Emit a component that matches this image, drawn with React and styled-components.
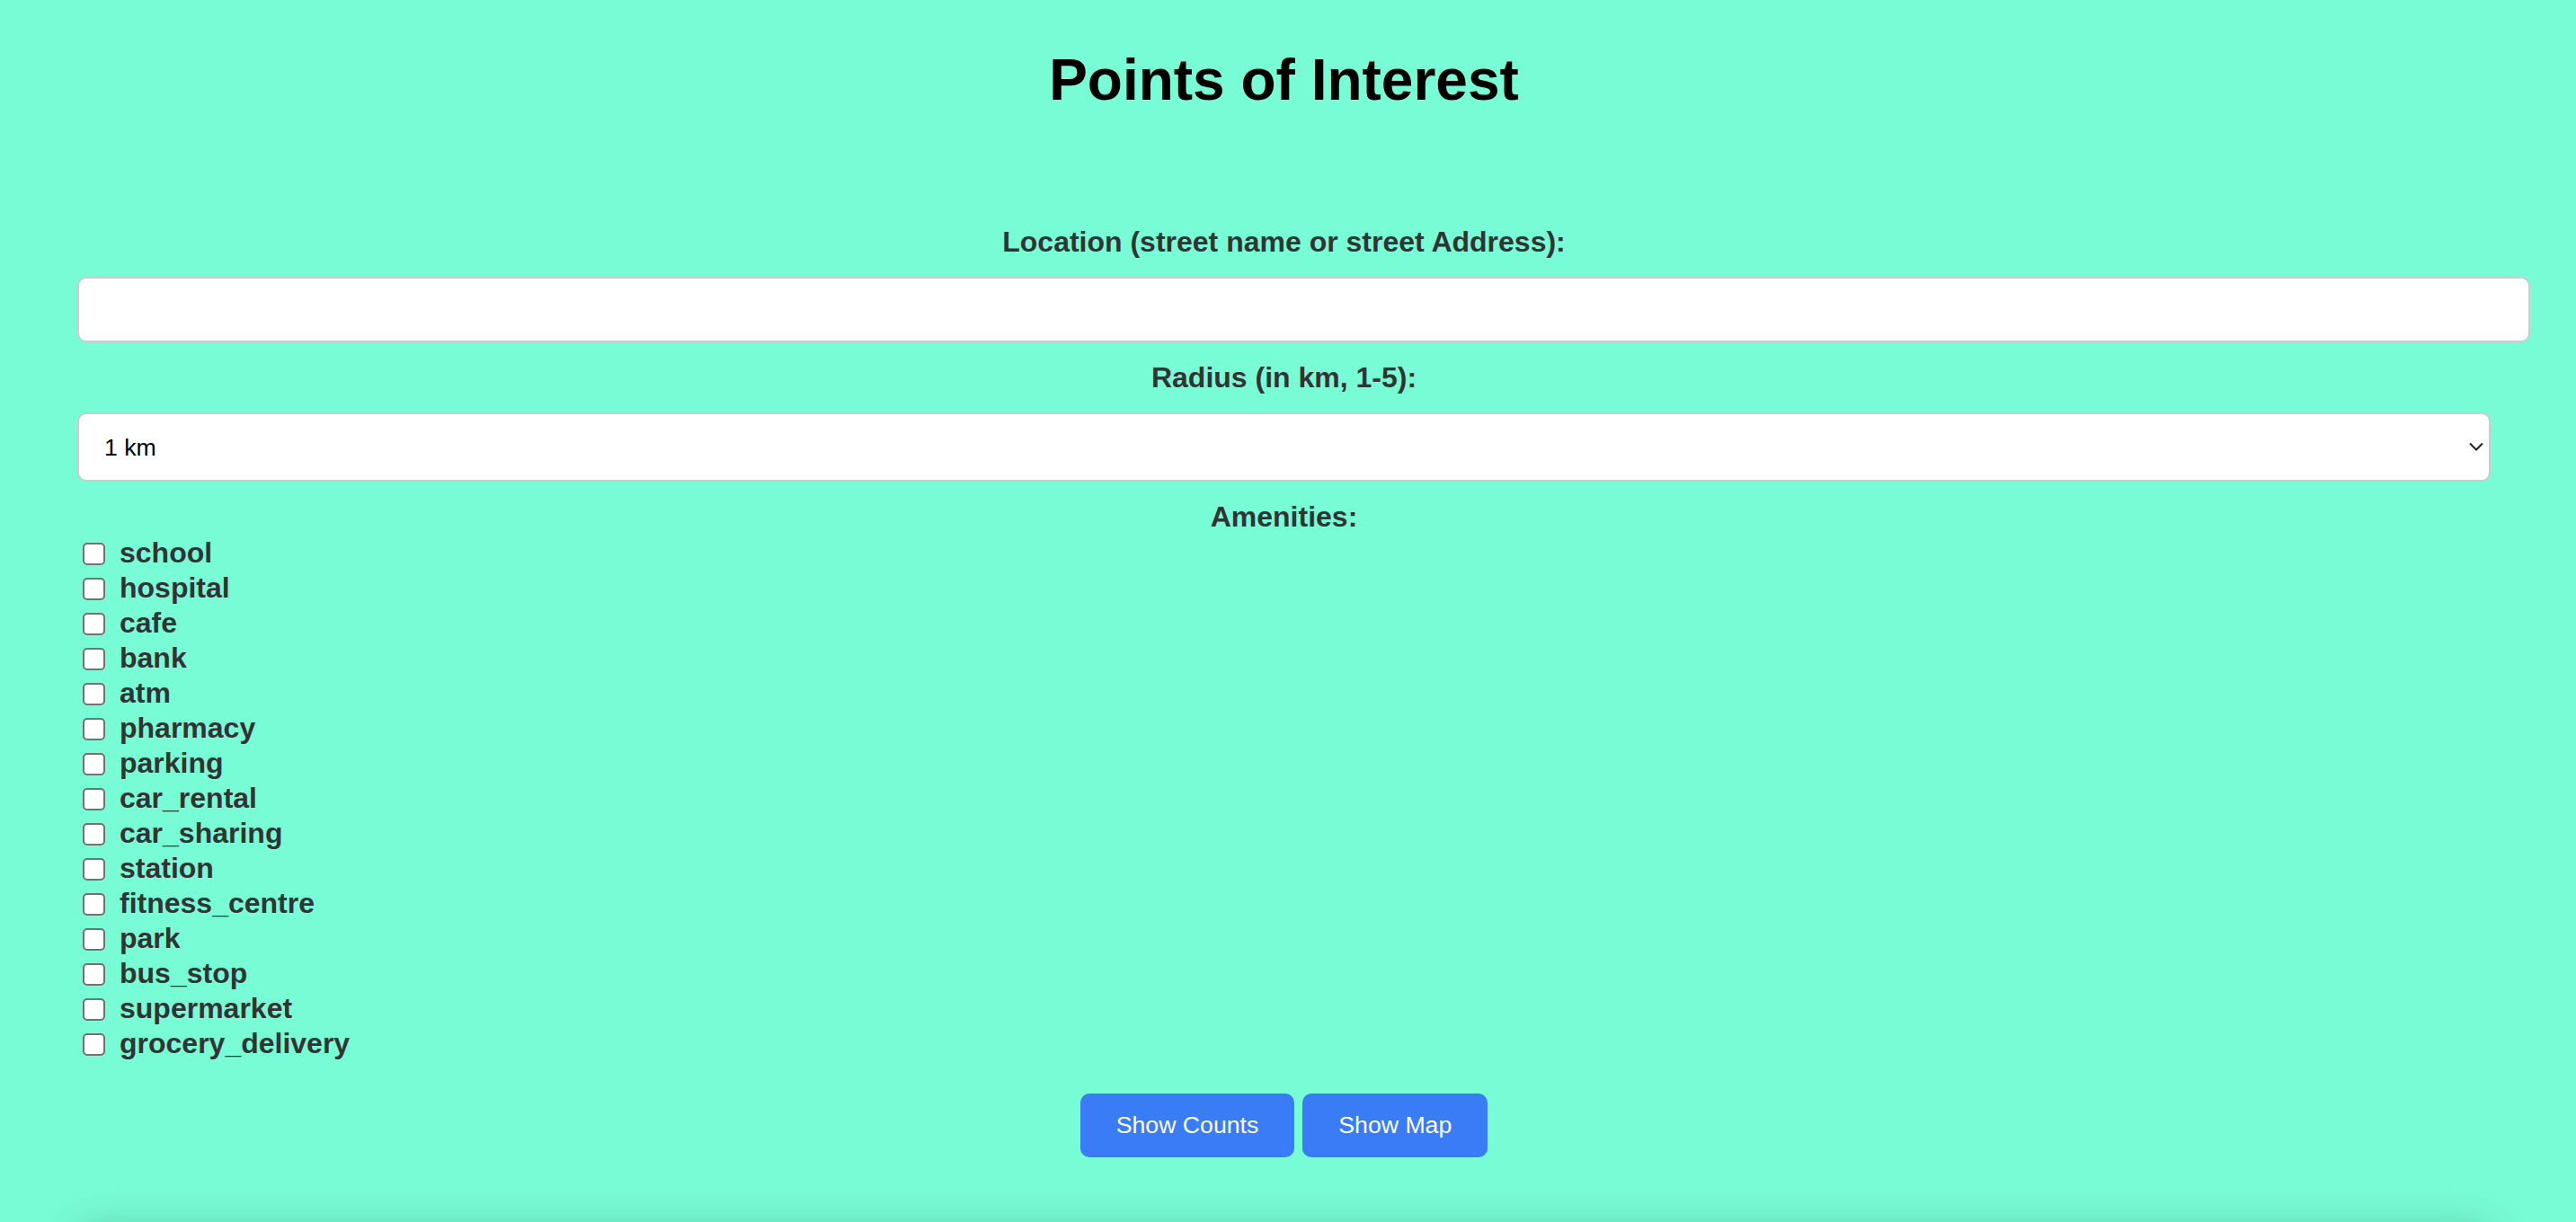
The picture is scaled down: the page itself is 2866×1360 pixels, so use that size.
import React, { useState } from "react";
import styled, { createGlobalStyle } from "styled-components";

const GlobalStyle = createGlobalStyle`
  html, body {
    margin: 0;
    background: #78fcd5;
  }
  body {
    font-family: "Liberation Sans", Helvetica, Arial, sans-serif;
  }
`;

const amenities = [
  "school",
  "hospital",
  "cafe",
  "bank",
  "atm",
  "pharmacy",
  "parking",
  "car_rental",
  "car_sharing",
  "station",
  "fitness_centre",
  "park",
  "bus_stop",
  "supermarket",
  "grocery_delivery",
];

const Page = styled.div`
  padding: 52px 95px 0 86px;
`;

const Title = styled.h1`
  margin: 0;
  font-size: 64px;
  line-height: 74px;
  font-weight: 700;
  color: #000;
  text-align: center;
`;

const Form = styled.form`
  margin-top: 125px;
  display: flex;
  flex-direction: column;
`;

const FieldLabel = styled.label`
  display: block;
  text-align: center;
  font-size: 32px;
  line-height: 37px;
  font-weight: 700;
  color: #333;
  margin-bottom: ${(p) => (p.$tight ? "0" : "20px")};
`;

const TextInput = styled.input`
  box-sizing: content-box;
  width: 100%;
  height: 29px;
  padding: 20px;
  margin: 0 0 21px;
  border: 2px solid #cccccc;
  border-radius: 10px;
  background: #fff;
  font-family: inherit;
  font-size: 26.67px;
  outline: none;
`;

const SelectWrap = styled.div`
  position: relative;
  margin-bottom: 21px;
`;

const Select = styled.select`
  appearance: none;
  -webkit-appearance: none;
  box-sizing: border-box;
  width: 100%;
  height: 77px;
  padding: 0 0 0 28px;
  margin: 0;
  border: 2px solid #cccccc;
  border-radius: 10px;
  background: #fff;
  color: #000;
  font-family: inherit;
  font-size: 26.67px;
  outline: none;
`;

const Chevron = styled.svg`
  position: absolute;
  right: 8px;
  top: 33px;
  width: 16px;
  height: 10px;
  pointer-events: none;
`;

const AmenityList = styled.div`
  display: flex;
  flex-direction: column;
  margin-top: 2px;
`;

const AmenityRow = styled.label`
  display: flex;
  align-items: center;
  height: 39px;
  padding-left: 6px;
  gap: 16px;
  font-size: 32px;
  font-weight: 700;
  color: #333;
`;

const Checkbox = styled.input`
  appearance: none;
  -webkit-appearance: none;
  width: 25px;
  height: 25px;
  margin: 1px 0 0;
  border: 2px solid #727272;
  border-radius: 5px;
  background: #fff;
  flex-shrink: 0;

  &:checked {
    background: #397cf6;
    border-color: #397cf6;
  }
`;

const ButtonRow = styled.div`
  display: flex;
  justify-content: center;
  gap: 9px;
  margin-top: 36px;
`;

const ActionButton = styled.button`
  height: 71px;
  padding: 0 40px;
  border: none;
  border-radius: 10px;
  background: #397cf6;
  color: #fff;
  font-family: inherit;
  font-size: 26.67px;
  cursor: pointer;
`;

const ResultsCard = styled.section`
  margin-top: 82px;
  height: 400px;
  border-radius: 16px;
  background: #78fcd5;
  box-shadow: 0 0 50px rgba(0, 0, 0, 0.22);
`;

export default function App() {
  const [location, setLocation] = useState("");
  const [radius, setRadius] = useState("1");
  const [checked, setChecked] = useState({});

  const toggle = (name) =>
    setChecked((prev) => ({ ...prev, [name]: !prev[name] }));

  return (
    <>
      <GlobalStyle />
      <Page>
        <Title>Points of Interest</Title>
        <Form onSubmit={(e) => e.preventDefault()}>
          <FieldLabel htmlFor="location">
            Location (street name or street Address):
          </FieldLabel>
          <TextInput
            id="location"
            type="text"
            value={location}
            onChange={(e) => setLocation(e.target.value)}
          />

          <FieldLabel htmlFor="radius">Radius (in km, 1-5):</FieldLabel>
          <SelectWrap>
            <Select
              id="radius"
              value={radius}
              onChange={(e) => setRadius(e.target.value)}
            >
              {[1, 2, 3, 4, 5].map((km) => (
                <option key={km} value={km}>
                  {km} km
                </option>
              ))}
            </Select>
            <Chevron viewBox="0 0 16 10">
              <path
                d="M1 1.5 L8 8.5 L15 1.5"
                fill="none"
                stroke="#222"
                strokeWidth="2"
              />
            </Chevron>
          </SelectWrap>

          <FieldLabel $tight>Amenities:</FieldLabel>
          <AmenityList>
            {amenities.map((name) => (
              <AmenityRow key={name}>
                <Checkbox
                  type="checkbox"
                  checked={!!checked[name]}
                  onChange={() => toggle(name)}
                />
                {name}
              </AmenityRow>
            ))}
          </AmenityList>

          <ButtonRow>
            <ActionButton type="button">Show Counts</ActionButton>
            <ActionButton type="button">Show Map</ActionButton>
          </ButtonRow>
        </Form>
        <ResultsCard />
      </Page>
    </>
  );
}
